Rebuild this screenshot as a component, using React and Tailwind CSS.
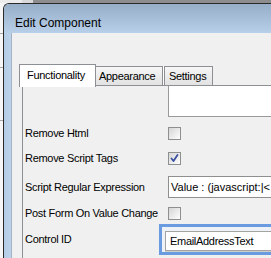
import React from "react";

const font = { fontFamily: "'Liberation Sans', Arial, sans-serif" };

function Checkbox({ checked }) {
  return (
    <div className="w-[13px] h-[13px] border border-[#8e8f8f] bg-gradient-to-br from-[#d6d6d6] to-[#ffffff] flex items-center justify-center">
      {checked && (
        <svg width="11" height="11" viewBox="0 0 11 11">
          <path d="M2.5 5.5 L4.5 8 L8.5 2" fill="none" stroke="#3b4fa0" strokeWidth="1.8" strokeLinecap="round" strokeLinejoin="round" />
        </svg>
      )}
    </div>
  );
}

function Label({ children }) {
  return (
    <div className="w-[145px] shrink-0 pl-[2px] text-[11px] tracking-[-0.3px] text-black whitespace-nowrap overflow-hidden leading-[13px]">
      {children}
    </div>
  );
}

export default function App() {
  return (
    <div className="w-[271px] h-[258px] overflow-hidden bg-[#f5f5f5] flex flex-col" style={font}>
      {/* top strip of background */}
      <div className="h-[3px] flex shrink-0">
        <div className="w-[22px] bg-[#ececec]" />
        <div className="w-[11px] bg-[#d9d9d9]" />
        <div className="flex-1 bg-[#8d8d8d]" />
      </div>
      <div className="flex-1 flex min-h-0">
        {/* left background strip */}
        <div className="w-[3px] shrink-0 flex flex-col bg-[#f6f6f6]">
          <div className="h-[30px]" />
          <div className="h-px bg-[#a8a8a8]" />
          <div className="h-[33px]" />
          <div className="h-px bg-[#a8a8a8]" />
          <div className="h-[52px]" />
          <div className="h-px bg-[#a8a8a8]" />
        </div>
        {/* window */}
        <div className="flex-1 flex flex-col border-l border-t border-[#2a2a2a] rounded-tl-[6px] overflow-hidden bg-[#b9d1ea] shadow-[inset_1px_1px_0_#dce6f1] min-w-0">
          <div className="h-[29px] shrink-0 bg-gradient-to-b from-[#97aec8] to-[#b8cfe9] pl-[11px] pt-[12px]">
            <div className="text-[12px] leading-[14px] text-black">Edit Component</div>
          </div>
          <div className="flex-1 flex min-h-0">
            <div className="w-[7px] shrink-0 bg-gradient-to-r from-[#b4cce6] to-[#bcd3eb]" />
            <div className="flex-1 bg-[#f0f0f0] border-l border-[#a3b2c4] pl-[7px] pt-[31px] flex flex-col min-w-0">
              {/* tabs */}
              <div className="h-[21px] flex items-end shrink-0 relative z-10">
                <div className="w-[77px] h-[23px] mb-[-2px] bg-white border border-b-0 border-[#8c8f94] pl-[7px] pt-[4px] text-[11px] tracking-[-0.3px] leading-[13px] text-black">
                  Functionality
                </div>
                <div className="w-[67px] h-[19px] bg-gradient-to-b from-[#f6f6f6] to-[#e2e2e2] border-t border-r border-[#8c8f94] pl-[3px] pt-[3px] text-[11px] tracking-[-0.3px] leading-[13px] text-black whitespace-nowrap overflow-hidden">
                  Appearance
                </div>
                <div className="w-px h-[19px] bg-[#ffffff]" />
                <div className="w-[49px] h-[19px] bg-gradient-to-b from-[#f6f6f6] to-[#e2e2e2] border border-b-0 border-[#8c8f94] pl-[4px] pt-[3px] text-[11px] tracking-[-0.3px] leading-[13px] text-black">
                  Settings
                </div>
              </div>
              {/* panel */}
              <div className="flex-1 ml-[3px] border-l border-t border-[#8c8f94] bg-[#f0f0f0] flex flex-col min-h-0 overflow-hidden">
                <div className="h-[31px] flex shrink-0">
                  <div className="w-[145px] shrink-0" />
                  <div className="flex-1 bg-white border-l border-b border-[#9a9a9a]" />
                </div>
                <div className="mt-[10px] h-[13px] flex items-center">
                  <Label>Remove Html</Label>
                  <Checkbox />
                </div>
                <div className="mt-[12px] h-[13px] flex items-center">
                  <Label>Remove Script Tags</Label>
                  <Checkbox checked />
                </div>
                <div className="mt-[11px] h-[22px] flex items-center">
                  <Label>Script Regular Expression</Label>
                  <div className="flex-1 h-[22px] bg-white border-l border-t border-b border-[#8f8f8f] pl-[2px] text-[11px] leading-[20px] whitespace-nowrap overflow-hidden text-black">
                    Value : (javascript:|&lt;
                  </div>
                </div>
                <div className="mt-[9px] h-[13px] flex items-center">
                  <Label>Post Form On Value Change</Label>
                  <Checkbox />
                </div>
                <div className="mt-[4px] h-[31px] flex items-center">
                  <Label>Control ID</Label>
                  <div className="flex-1 ml-[-9px] h-[31px] border-l-[3px] border-t-[3px] border-b-[3px] border-[#6a9be0] bg-[#eef2f7] pt-[4px] pl-[3px] pb-[1px]">
                    <div className="h-[20px] bg-white border-l border-t border-b border-[#a3a3a3] pl-[4px] text-[11px] tracking-[-0.3px] leading-[18px] text-black whitespace-nowrap shadow-[0_1px_0_#cfcfcf]">
                      EmailAddressText
                    </div>
                  </div>
                </div>
              </div>
            </div>
          </div>
        </div>
      </div>
    </div>
  );
}
